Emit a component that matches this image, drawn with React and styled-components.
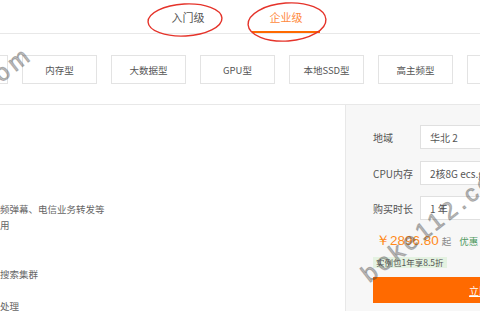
import styled, { createGlobalStyle } from 'styled-components';

const GlobalStyle = createGlobalStyle`
  html, body {
    margin: 0;
    padding: 0;
    background: #fff;
  }
  body {
    font-family: "Noto Sans CJK SC", "Liberation Sans", sans-serif;
    color: #555;
  }
`;

const Page = styled.div`
  position: relative;
  width: 480px;
  height: 312px;
  overflow: hidden;
  background: #fff;
`;

const TabBar = styled.div`
  display: flex;
  gap: 30px;
  height: 34px;
  padding-left: 154px;
  border-bottom: 1px solid #e8e8e8;
  box-sizing: border-box;
`;

const Tab = styled.div`
  width: 68px;
  display: flex;
  align-items: center;
  justify-content: center;
  font-size: 11px;
  color: ${(p) => (p.active ? '#ff8a3d' : '#555')};
  border-bottom: 2px solid ${(p) => (p.active ? '#ff6a00' : 'transparent')};
  box-sizing: border-box;
  padding-top: 2px;
`;

const CategoryRow = styled.div`
  display: flex;
  gap: 14px;
  height: 71px;
  padding-top: 21px;
  margin-left: -67px;
  border-bottom: 1px solid #e8e8e8;
  box-sizing: border-box;
`;

const Category = styled.div`
  flex: 0 0 75px;
  height: 29px;
  border: 1px solid #e3e3e3;
  box-sizing: border-box;
  display: flex;
  align-items: center;
  justify-content: center;
  font-size: 9.5px;
  color: #555;
  white-space: nowrap;
`;

const Main = styled.div`
  display: flex;
  height: 206px;
`;

const LeftPanel = styled.div`
  flex: 0 0 345px;
  padding-top: 96px;
  box-sizing: border-box;
`;

const Line = styled.div`
  height: 16px;
  line-height: 16px;
  font-size: 9.5px;
  color: #666;
  white-space: nowrap;
  margin-top: ${(p) => p.gap || 0}px;
`;

const RightPanel = styled.div`
  flex: 1;
  min-width: 0;
  overflow: hidden;
  background: #f7f7f7;
  border-left: 1px solid #e8e8e8;
  padding: 20px 0 0 27px;
  display: flex;
  flex-direction: column;
`;

const FormRow = styled.div`
  display: flex;
  align-items: center;
  height: 24px;
  margin-bottom: ${(p) => p.mb}px;
`;

const Label = styled.div`
  flex: 0 0 47px;
  font-size: 10px;
  color: #555;
  white-space: nowrap;
`;

const Field = styled.div`
  flex: 1;
  min-width: 0;
  height: 24px;
  background: #fff;
  border: 1px solid #e0e0e0;
  border-right: none;
  box-sizing: border-box;
  padding-left: 9px;
  display: flex;
  align-items: center;
  font-size: 10px;
  color: #555;
  white-space: nowrap;
  overflow: hidden;
`;

const PriceRow = styled.div`
  display: flex;
  align-items: baseline;
  height: 20px;
  margin-top: 12px;
  white-space: nowrap;
`;

const Price = styled.span`
  font-family: "Liberation Sans", sans-serif;
  font-size: 13.5px;
  color: #ff8a1a;
  margin-left: 3px;
`;

const Qi = styled.span`
  font-size: 9.5px;
  color: #888;
  margin-left: 3px;
`;

const Discount = styled.span`
  font-size: 9.5px;
  color: #4f9a5f;
  margin-left: 8px;
`;

const Tag = styled.div`
  align-self: flex-start;
  margin-top: 5px;
  height: 11px;
  line-height: 11px;
  padding: 0 3px;
  background: #e4f2e1;
  font-size: 8.5px;
  color: #555;
  white-space: nowrap;
`;

const BuyButton = styled.div`
  margin-top: 9px;
  height: 26px;
  flex: 0 0 26px;
  background: #ff6a00;
  color: #fff;
  font-size: 10px;
  display: flex;
  align-items: center;
  padding-left: 96px;
  white-space: nowrap;
  text-decoration: underline;
`;

const Watermark = styled.div`
  position: absolute;
  left: ${(p) => p.x}px;
  top: ${(p) => p.y}px;
  font-family: "Liberation Sans", sans-serif;
  font-size: 24px;
  letter-spacing: 4px;
  color: rgba(70, 70, 70, 0.34);
  -webkit-text-stroke: 1px rgba(70, 70, 70, 0.34);
  white-space: nowrap;
  transform-origin: 0 100%;
  transform: rotate(-38deg);
  pointer-events: none;
`;

const Marks = styled.svg`
  position: absolute;
  left: 0;
  top: 0;
  pointer-events: none;
`;

export default function App() {
  return (
    <Page>
      <GlobalStyle />
      <TabBar>
        <Tab>入门级</Tab>
        <Tab active>企业级</Tab>
      </TabBar>
      <CategoryRow>
        <Category>计算型</Category>
        <Category>内存型</Category>
        <Category>大数据型</Category>
        <Category>GPU型</Category>
        <Category>本地SSD型</Category>
        <Category>高主频型</Category>
        <Category>共享型</Category>
      </CategoryRow>
      <Main>
        <LeftPanel>
          <Line>频弹幕、电信业务转发等</Line>
          <Line>用</Line>
          <Line gap={33}>搜索集群</Line>
          <Line gap={16}>处理</Line>
        </LeftPanel>
        <RightPanel>
          <FormRow mb={12}>
            <Label>地域</Label>
            <Field>华北 2</Field>
          </FormRow>
          <FormRow mb={11}>
            <Label>CPU内存</Label>
            <Field>2核8G ecs.g5.large</Field>
          </FormRow>
          <FormRow mb={0}>
            <Label>购买时长</Label>
            <Field>1 年</Field>
          </FormRow>
          <PriceRow>
            <Price>￥2896.80</Price>
            <Qi>起</Qi>
            <Discount>优惠 ¥511.20</Discount>
          </PriceRow>
          <Tag>实例包1年享8.5折</Tag>
          <BuyButton>立即购买</BuyButton>
        </RightPanel>
      </Main>
      <Watermark x={373} y={260}>boke112.com</Watermark>
      <Watermark x={-109} y={149}>boke112.com</Watermark>
      <Marks width="480" height="50" viewBox="0 0 480 50">
        <ellipse cx="185" cy="20" rx="37" ry="16" fill="none" stroke="#e5332a" strokeWidth="1.4" transform="rotate(-3 185 20)" />
        <ellipse cx="287" cy="22" rx="39" ry="19" fill="none" stroke="#e5332a" strokeWidth="1.4" transform="rotate(-4 287 22)" />
      </Marks>
    </Page>
  );
}
